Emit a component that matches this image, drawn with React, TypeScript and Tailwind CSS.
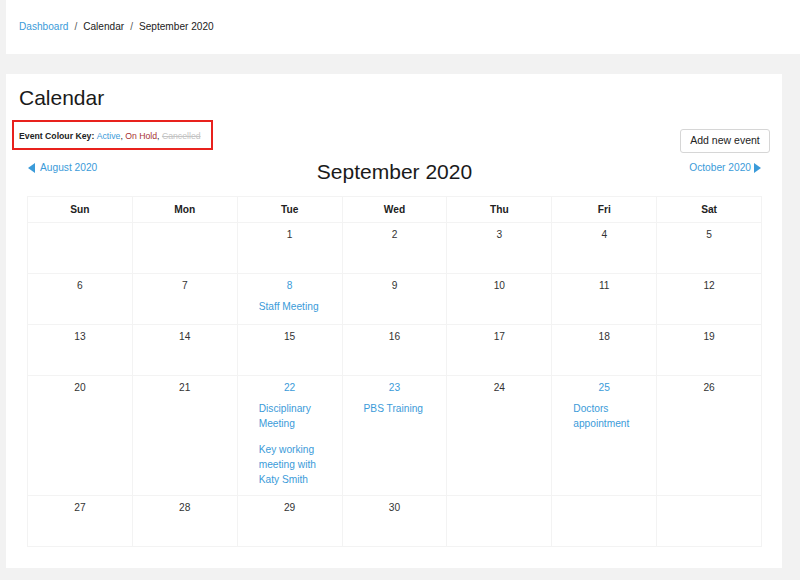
import React from "react";

type Ev = { title: string };
const events: Record<number, Ev[]> = {
  8: [{ title: "Staff Meeting" }],
  22: [{ title: "Disciplinary Meeting" }, { title: "Key working meeting with Katy Smith" }],
  23: [{ title: "PBS Training" }],
  25: [{ title: "Doctors appointment" }],
};

const weeks: (number | null)[][] = [
  [null, null, 1, 2, 3, 4, 5],
  [6, 7, 8, 9, 10, 11, 12],
  [13, 14, 15, 16, 17, 18, 19],
  [20, 21, 22, 23, 24, 25, 26],
  [27, 28, 29, 30, null, null, null],
];

const days = ["Sun", "Mon", "Tue", "Wed", "Thu", "Fri", "Sat"];

function LeftTri() {
  return (
    <svg width="7" height="10" viewBox="0 0 7 10">
      <polygon points="7,0 7,10 0,5" fill="#3b9bd9" />
    </svg>
  );
}
function RightTri() {
  return (
    <svg width="7" height="10" viewBox="0 0 7 10">
      <polygon points="0,0 0,10 7,5" fill="#3b9bd9" />
    </svg>
  );
}

export default function App() {
  return (
    <div
      className="min-h-[580px] bg-[#f2f2f2] pl-[6px] pb-[13px] text-[#222]"
      style={{ fontFamily: '"Liberation Sans", Arial, Helvetica, sans-serif' }}
    >
      <div className="h-[54px] bg-white flex items-center pl-[13px] text-[10.1px] leading-[14px]">
        <span className="text-[#3b9bd9]">Dashboard</span>
        <span className="mx-[6px] text-[#555]">/</span>
        <span>Calendar</span>
        <span className="mx-[6px] text-[#555]">/</span>
        <span>September 2020</span>
      </div>

      <div className="mt-[20px] mr-[18px] bg-white pt-[12px] pl-[13px] pr-[12px] pb-[21px]">
        <h1 className="text-[21px] leading-[24px] text-[#1a1a1a]">Calendar</h1>

        <div className="flex items-start justify-between mt-[10px] -ml-[7px]">
          <div className="w-[201px] h-[30px] border-[2px] border-[#e8211d] flex items-center pl-[5px] pt-[2px] text-[8.7px] leading-[12px] whitespace-pre">
            <span className="font-bold">Event Colour Key: </span>
            <span className="text-[#3b9bd9]">Active</span>
            <span>, </span>
            <span className="text-[#a83232]">On Hold</span>
            <span>, </span>
            <span className="text-[#c4c4c4] line-through">Cancelled</span>
          </div>
          <button className="mt-[9px] w-[90px] h-[24px] border border-[#d6d6d6] rounded-[3px] bg-white text-[10.5px] text-[#222] flex items-center justify-center">
            Add new event
          </button>
        </div>

        <div className="mx-[8px] mt-[7px] px-[1px] flex items-start justify-between">
          <div className="mt-[1px] flex items-center gap-[5px] text-[10.2px] leading-[14px] text-[#3b9bd9] w-[120px]">
            <LeftTri />
            <span>August 2020</span>
          </div>
          <div className="text-[21px] leading-[24px] text-[#1a1a1a]">September 2020</div>
          <div className="mt-[1px] flex items-center justify-end gap-[3px] text-[10.2px] leading-[14px] text-[#3b9bd9] w-[120px]">
            <span>October 2020</span>
            <RightTri />
          </div>
        </div>

        <div className="mx-[8px] mt-[12px] grid grid-cols-7 border-l border-t border-[#f3f3f3] text-[10.2px]">
          {days.map((d) => (
            <div
              key={d}
              className="h-[26px] flex items-center justify-center font-bold border-r border-b border-[#f3f3f3]"
            >
              {d}
            </div>
          ))}
          {weeks.flat().map((n, i) => {
            const evs = n ? events[n] : undefined;
            return (
              <div
                key={i}
                className="min-h-[51px] border-r border-b border-[#f3f3f3] pt-[5px] pb-[8px] px-[21px]"
              >
                {n !== null && (
                  <div className={`text-center leading-[14px] ${evs ? "text-[#3b9bd9]" : "text-[#333]"}`}>{n}</div>
                )}
                {evs && (
                  <div className="mt-[6px] flex flex-col gap-[11px]">
                    {evs.map((e) => (
                      <div key={e.title} className="leading-[15px] text-[#3b9bd9]">
                        {e.title}
                      </div>
                    ))}
                  </div>
                )}
              </div>
            );
          })}
        </div>
      </div>
    </div>
  );
}
